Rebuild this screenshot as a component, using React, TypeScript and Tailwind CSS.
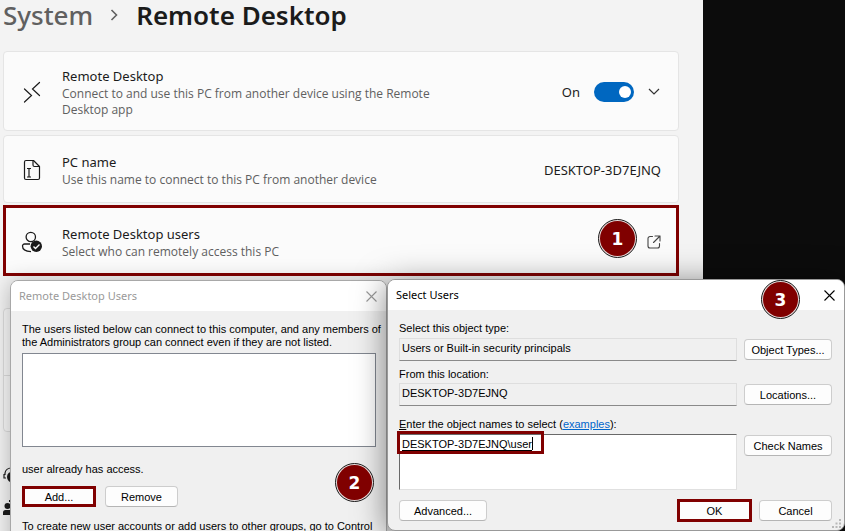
import type { ReactNode } from 'react';

const BUTTON =
  'flex h-[21px] items-center justify-center rounded-[4px] border border-[#cdcdcd] border-b-[#b5b5b5] bg-[#fdfdfd] text-[11px] leading-[14px] text-black';

function DialogButton({ children, className = '' }: { children: ReactNode; className?: string }) {
  return (
    <button type="button" className={`${BUTTON} ${className}`}>
      {children}
    </button>
  );
}

function MarkedButton({ children, className = '' }: { children: ReactNode; className?: string }) {
  return (
    <button
      type="button"
      className={`flex items-center justify-center border-[3px] border-[#800000] bg-[#fdfdfd] text-[11px] leading-[14px] text-black ${className}`}
    >
      {children}
    </button>
  );
}

function StepBadge({ step, className }: { step: number; className: string }) {
  return (
    <span
      className={`absolute z-10 flex size-[39px] items-center justify-center rounded-full border border-[#1a1a1a] bg-[#e8dada] ${className}`}
    >
      <span className="flex size-[35px] items-center justify-center rounded-full bg-[#800000] font-['DejaVu_Sans',sans-serif] text-[17px] leading-[20px] font-bold text-white">
        {step}
      </span>
    </span>
  );
}

function CloseIcon() {
  return (
    <svg width="11" height="11" viewBox="0 0 11 11" fill="none" stroke="currentColor" strokeWidth="1.1" aria-hidden="true">
      <path d="M.5.5l10 10M10.5.5l-10 10" />
    </svg>
  );
}

function RemoteIcon() {
  return (
    <svg width="20" height="22" viewBox="0 0 20 22" fill="none" stroke="#1b1b1b" strokeWidth="1.2" strokeLinecap="round" aria-hidden="true">
      <path d="M2.5 8l7 6.5-7 6.5M17.5 1.5l-7 6.5 7 6.5" />
    </svg>
  );
}

function RenameIcon() {
  return (
    <svg width="20" height="22" viewBox="0 0 20 22" fill="none" stroke="#1b1b1b" strokeWidth="1.2" strokeLinejoin="round" aria-hidden="true">
      <path d="M4 1.500h7.500L17.500 7.500v11.500a1.500 1.500 0 0 1-1.500 1.500H4A1.500 1.500 0 0 1 2.500 19V3A1.500 1.500 0 0 1 4 1.500z" />
      <path d="M11 1.500V6a1.500 1.500 0 0 0 1.500 1.500H17.500" />
      <path d="M5 9.500h4M5 18h4M7 9.500V18" />
    </svg>
  );
}

function UserCheckIcon() {
  return (
    <svg width="22" height="22" viewBox="0 0 22 22" fill="none" stroke="#1b1b1b" strokeWidth="1.3" aria-hidden="true">
      <circle cx="9.8" cy="6" r="4.7" />
      <path d="M9 13H3.500A2 2 0 0 0 1.500 15c0 3.500 3.200 5.400 8.500 5.600" />
      <circle cx="15.3" cy="15.3" r="5.7" fill="#1b1b1b" stroke="none" />
      <path d="M12.500 15.500l2 2 4-4" stroke="#fff" strokeWidth="1.4" />
    </svg>
  );
}

function SettingText({ title, detail }: { title: string; detail: string }) {
  return (
    <div className="min-w-0 flex-1">
      <h2 className="text-[13px] leading-[20px] text-[#1b1b1b]">{title}</h2>
      <p className="max-w-[380px] font-['Open_Sans','Noto_Sans',sans-serif] text-[12px] leading-[16px] text-[#606060]">{detail}</p>
    </div>
  );
}

function SettingsPage() {
  return (
    <main className="min-w-0 flex-1 bg-[#f3f3f3] pr-[24px] pl-[3px] font-['Noto_Sans','Open_Sans',sans-serif]">
      <nav aria-label="Breadcrumb" className="flex h-[51px] items-start text-[26px] leading-[30px] font-medium">
        <a href="#system" className="text-[#606060]">System</a>
        <svg className="mx-[17px] mt-[9px]" width="9" height="12" viewBox="0 0 9 12" fill="none" stroke="#606060" strokeWidth="1.6" aria-hidden="true">
          <path d="M1.500 1l5 5-5 5" />
        </svg>
        <h1 className="font-semibold text-[#1b1b1b]">Remote Desktop</h1>
      </nav>

      <div className="flex flex-col gap-[4px]">
        <section className="flex h-[80px] items-center gap-[19px] rounded-[4px] border border-[#e5e5e5] bg-[#fbfbfb] pt-[2px] pr-[18px] pl-[17px]">
          <span className="flex w-[22px] justify-center"><RemoteIcon /></span>
          <SettingText title="Remote Desktop" detail="Connect to and use this PC from another device using the Remote Desktop app" />
          <label className="relative flex items-center gap-[14px] text-[13px] leading-[20px] text-[#1b1b1b]">
            On
            <input type="checkbox" role="switch" defaultChecked className="sr-only" />
            <span className="flex h-[20px] w-[40px] items-center justify-end rounded-full bg-[#0067c0] pr-[3px]">
              <span className="size-[12px] rounded-full bg-white" />
            </span>
          </label>
          <button type="button" aria-label="Expand" className="-ml-[5px]">
            <svg width="12" height="8" viewBox="0 0 12 8" fill="none" stroke="#333" strokeWidth="1.2" aria-hidden="true">
              <path d="M1 1l5 5 5-5" />
            </svg>
          </button>
        </section>

        <section className="flex h-[68px] items-center gap-[19px] rounded-[4px] border border-[#e5e5e5] bg-[#fbfbfb] px-[17px] pt-[2px]">
          <span className="flex w-[22px] justify-center"><RenameIcon /></span>
          <SettingText title="PC name" detail="Use this name to connect to this PC from another device" />
          <span className="text-[13px] leading-[20px] text-[#1b1b1b]">DESKTOP-3D7EJNQ</span>
        </section>

        <section className="-mt-[2px] flex h-[71px] items-center gap-[19px] border-[3px] border-[#800000] bg-[#fbfbfb] px-[15px] pt-[2px]">
          <span className="flex w-[22px] justify-center"><UserCheckIcon /></span>
          <SettingText title="Remote Desktop users" detail="Select who can remotely access this PC" />
          <button type="button" aria-label="Open Remote Desktop users">
            <svg width="14" height="14" viewBox="0 0 14 14" fill="none" stroke="#444" strokeWidth="1.1" strokeLinecap="round" strokeLinejoin="round" aria-hidden="true">
              <path d="M5.500 1.500H3A2 2 0 0 0 1 3.500V11a2 2 0 0 0 2 2h7.500a2 2 0 0 0 2-2V8.500M8 1h5v5M13 1L6.500 7.500" />
            </svg>
          </button>
        </section>
      </div>

      <div className="mt-[32px] h-[124px] divide-y divide-[#dcdcdc] rounded-[4px] border border-[#dcdcdc] bg-[#f8f8f8]">
        <div className="h-[67px]" />
        <div className="h-[56px]" />
      </div>

      <div className="mt-[35px] flex flex-col gap-[14px]">
        <svg width="16" height="18" viewBox="0 0 16 18" fill="none" stroke="#1b1b1b" strokeWidth="1.2" aria-hidden="true">
          <path d="M2 8V6a6 6 0 0 1 6-5M1 7v4h2" />
          <circle cx="9.5" cy="10" r="5.5" fill="#1b1b1b" stroke="none" />
        </svg>
        <svg width="16" height="18" viewBox="0 0 16 18" fill="#1b1b1b" aria-hidden="true">
          <circle cx="4.5" cy="7" r="3" />
          <path d="M0 16v-2.500A2.500 2.500 0 0 1 2.500 11h8v5zM6 1h5v2H6z" />
        </svg>
      </div>
    </main>
  );
}

function UsersDialog() {
  return (
    <div
      role="dialog"
      aria-label="Remote Desktop Users"
      className="absolute top-[280px] -bottom-[40px] left-[10px] w-[377px] overflow-hidden rounded-t-[8px] border border-[#a8a8a8] bg-[#f0f0f0] shadow-[0_2px_22px_rgba(0,0,0,0.28)]"
    >
      <header className="flex h-[30px] items-center justify-between bg-white pr-[9px] pl-[8px] text-[#999]">
        <h2 className="font-['Noto_Sans','Open_Sans',sans-serif] text-[11px] leading-[16px]">Remote Desktop Users</h2>
        <button type="button" aria-label="Close"><CloseIcon /></button>
      </header>
      <div className="px-[11px] pt-[12px] text-[11px] leading-[13px]">
        <p className="whitespace-nowrap">
          The users listed below can connect to this computer, and any members of
          <br />
          the Administrators group can connect even if they are not listed.
        </p>
        <select aria-label="Users" size={5} className="mt-[4px] block h-[94px] w-[354px] border border-[#828790] bg-white" />
        <p className="mt-[16px]">user already has access.</p>
        <div className="mt-[10px] flex gap-[9px]">
          <MarkedButton className="h-[21px] w-[74px]">Add...</MarkedButton>
          <DialogButton className="w-[73px]">Remove</DialogButton>
        </div>
        <p className="mt-[13px] whitespace-nowrap">To create new user accounts or add users to other groups, go to Control</p>
      </div>
    </div>
  );
}

const READ_ONLY_FIELD =
  'h-[23px] w-full border border-[#dedede] border-b-[#8a8a8a] bg-[#f0f0f0] px-[2px] pb-[3px] text-[11px] leading-[14px]';

function SelectDialog() {
  return (
    <div
      role="dialog"
      aria-label="Select Users"
      className="absolute top-[279px] right-0 left-[387px] rounded-[8px] border border-[#999] bg-[#f0f0f0] shadow-[0_4px_32px_rgba(0,0,0,0.5)]"
    >
      <header className="flex h-[30px] items-center justify-between rounded-t-[7px] bg-white pr-[9px] pl-[8px] text-black">
        <h2 className="font-['Noto_Sans','Open_Sans',sans-serif] text-[11px] leading-[16px]">Select Users</h2>
        <button type="button" aria-label="Close"><CloseIcon /></button>
      </header>
      <form className="flex flex-col pt-[11px] pr-[12px] pb-[8px] pl-[11px] text-[11px] leading-[14px]" onSubmit={(e) => e.preventDefault()}>
        <label htmlFor="object-type">Select this object type:</label>
        <div className="mt-[3px] flex items-center gap-[7px]">
          <input id="object-type" readOnly defaultValue="Users or Built-in security principals" className={READ_ONLY_FIELD} />
          <DialogButton className="w-[88px] shrink-0">Object Types...</DialogButton>
        </div>
        <label htmlFor="location" className="mt-[6px]">From this location:</label>
        <div className="mt-[2px] flex items-center gap-[7px]">
          <input id="location" readOnly defaultValue="DESKTOP-3D7EJNQ" className={READ_ONLY_FIELD} />
          <DialogButton className="w-[88px] shrink-0">Locations...</DialogButton>
        </div>
        <div className="mt-[11px]">
          <label htmlFor="object-names"><u>E</u>nter the object names to select (</label>
          <a href="#examples" className="text-[#0066cc] underline">examples</a>):
        </div>
        <div className="relative mt-[3px] flex items-start gap-[7px]">
          <textarea
            id="object-names"
            spellCheck={false}
            defaultValue={'DESKTOP-3D7EJNQ\\user'}
            className="block h-[56px] w-full resize-none border border-[#e0e0e0] border-t-[#696969] border-l-[#696969] bg-white px-[2px] py-[2px] underline decoration-1 underline-offset-2"
          />
          <DialogButton className="mt-px w-[88px] shrink-0">Check Names</DialogButton>
          <span className="pointer-events-none absolute -top-[3px] -left-[2px] h-[23px] w-[147px] border-[3px] border-[#800000]" />
          <span className="pointer-events-none absolute top-[3px] left-[133px] h-[13px] w-px bg-black" />
        </div>
        <div className="mt-[9px] flex items-center gap-[7px]">
          <DialogButton className="mr-auto w-[88px]">Advanced...</DialogButton>
          <MarkedButton className="h-[23px] w-[75px]">OK</MarkedButton>
          <DialogButton className="w-[73px]">Cancel</DialogButton>
        </div>
      </form>
      <svg className="absolute right-[3px] bottom-[2px]" width="9" height="9" viewBox="0 0 9 9" fill="#b8b8b8" aria-hidden="true">
        <path d="M7 0h2v2H7zM7 3.500h2v2H7zM7 7h2v2H7zM3.500 3.500h2v2h-2zM3.500 7h2v2h-2zM0 7h2v2H0z" />
      </svg>
    </div>
  );
}

export default function App() {
  return (
    <div className="relative flex h-screen overflow-hidden bg-[#0c0c0c] font-['Liberation_Sans',Arial,sans-serif] text-black">
      <SettingsPage />
      <div className="w-[142px] shrink-0 bg-[#0c0c0c]" />
      <UsersDialog />
      <SelectDialog />
      <StepBadge step={1} className="top-[219px] right-[208px]" />
      <StepBadge step={2} className="top-[463px] left-[335px]" />
      <StepBadge step={3} className="top-[280px] right-[45px]" />
    </div>
  );
}
